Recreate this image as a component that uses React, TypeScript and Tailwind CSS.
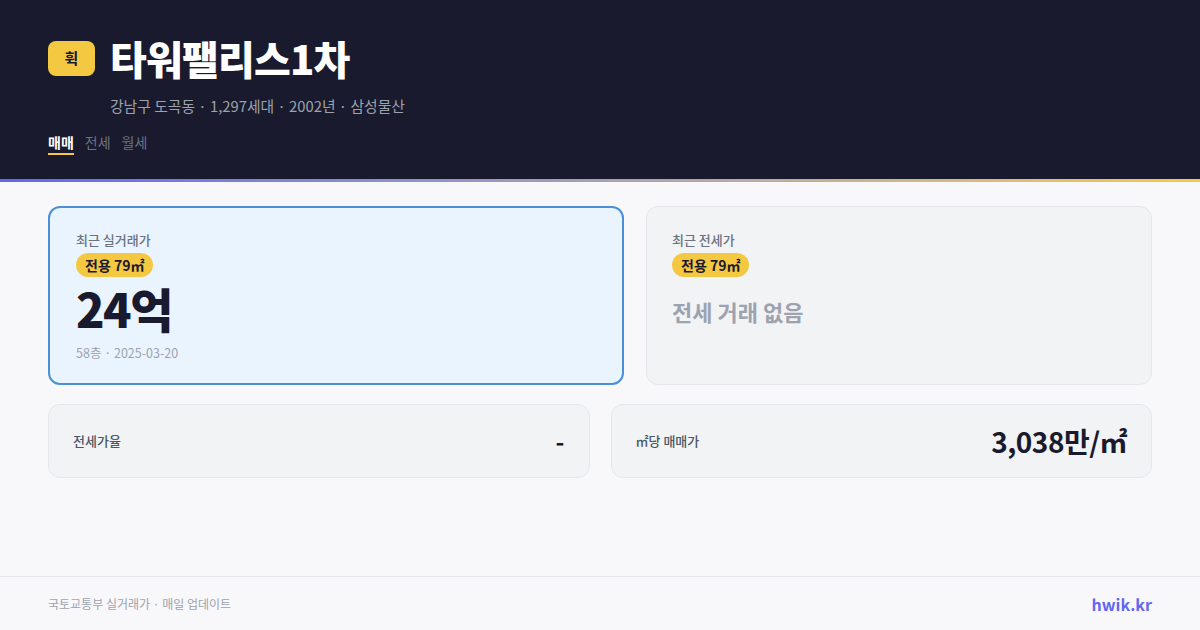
import React from 'react';

const font = { fontFamily: '"Noto Sans CJK KR", "Noto Sans", sans-serif' };

const tabs = ['매매', '전세', '월세'];

export default function App() {
  return (
    <div className="w-[1200px] h-[630px] flex flex-col bg-[#f8f8fa]" style={font}>
      {/* header */}
      <header className="h-[179px] bg-[#1a1a2e] px-12 pt-[35px]">
        <div className="flex items-center gap-[15px] h-[46px]">
          <div className="w-[47px] h-[35px] rounded-lg bg-[#f5c842] flex items-center justify-center text-[#1a1a2e] text-[15px] font-bold">
            휙
          </div>
          <h1 className="text-white text-[40px] font-black tracking-[-0.8px] leading-none">타워팰리스1차</h1>
        </div>
        <p className="mt-[15px] pl-[62px] text-[14.8px] leading-5 text-[#9ca3af]">
          강남구 도곡동 · 1,297세대 · 2002년 · 삼성물산
        </p>
        <nav className="mt-[16px] flex gap-[11px] text-[14px] leading-5">
          {tabs.map((t, i) => (
            <span
              key={t}
              className={
                i === 0
                  ? 'text-white font-bold border-b-2 border-[#f5c842] pb-[1px]'
                  : 'text-[#6b7280]'
              }
            >
              {t}
            </span>
          ))}
        </nav>
      </header>
      <div className="h-[3px] bg-gradient-to-r from-[#6366f1] to-[#f5c842]" />

      {/* main */}
      <main className="flex-1 px-12 pt-[24px]">
        <div className="flex gap-[22px]">
          <div className="w-[576px] h-[179px] shrink-0 rounded-xl border-2 border-[#4a90d9] bg-[#eaf4ff] px-[26px] pt-[22px]">
            <p className="text-[13px] leading-5 font-medium text-[#6b7280]">최근 실거래가</p>
            <span className="mt-[3px] inline-block rounded-full bg-[#f5c842] px-[9px] text-[14px] leading-6 font-bold text-[#1a1a2e]">
              전용 79㎡
            </span>
            <p className="mt-[5px] text-[47px] leading-[52px] font-black tracking-[-1.5px] text-[#1a1a2e]">24억</p>
            <p className="mt-[11px] text-[12.5px] leading-4 text-[#9ca3af]">58층 · 2025-03-20</p>
          </div>
          <div className="flex-1 h-[179px] rounded-xl border border-[#e5e7eb] bg-[#f2f3f5] px-[25px] pt-[23px]">
            <p className="text-[13px] leading-5 font-medium text-[#6b7280]">최근 전세가</p>
            <span className="mt-[3px] inline-block rounded-full bg-[#f5c842] px-[9px] text-[14px] leading-6 font-bold text-[#1a1a2e]">
              전용 79㎡
            </span>
            <p className="mt-[18px] text-[22px] leading-8 font-bold text-[#9ca3af]">전세 거래 없음</p>
          </div>
        </div>

        <div className="mt-[19px] grid grid-cols-2 gap-[21px]">
          <div className="h-[74px] rounded-xl border border-[#e5e7eb] bg-[#f2f3f5] px-6 flex items-center justify-between">
            <span className="text-[13px] font-medium text-[#4b5563]">전세가율</span>
            <span className="text-[24px] font-bold text-[#1a1a2e]">-</span>
          </div>
          <div className="h-[74px] rounded-xl border border-[#e5e7eb] bg-[#f2f3f5] px-6 flex items-center justify-between">
            <span className="text-[13px] font-medium text-[#4b5563]">㎡당 매매가</span>
            <span className="text-[28px] font-bold tracking-[-0.5px] text-[#1a1a2e]">3,038만/㎡</span>
          </div>
        </div>
      </main>

      {/* footer */}
      <footer className="h-[54px] border-t border-[#e5e7eb] px-12 flex items-center justify-between">
        <span className="text-[12px] text-[#9ca3af]">국토교통부 실거래가 · 매일 업데이트</span>
        <span className="text-[16px] font-bold text-[#6366f1]">hwik.kr</span>
      </footer>
    </div>
  );
}
